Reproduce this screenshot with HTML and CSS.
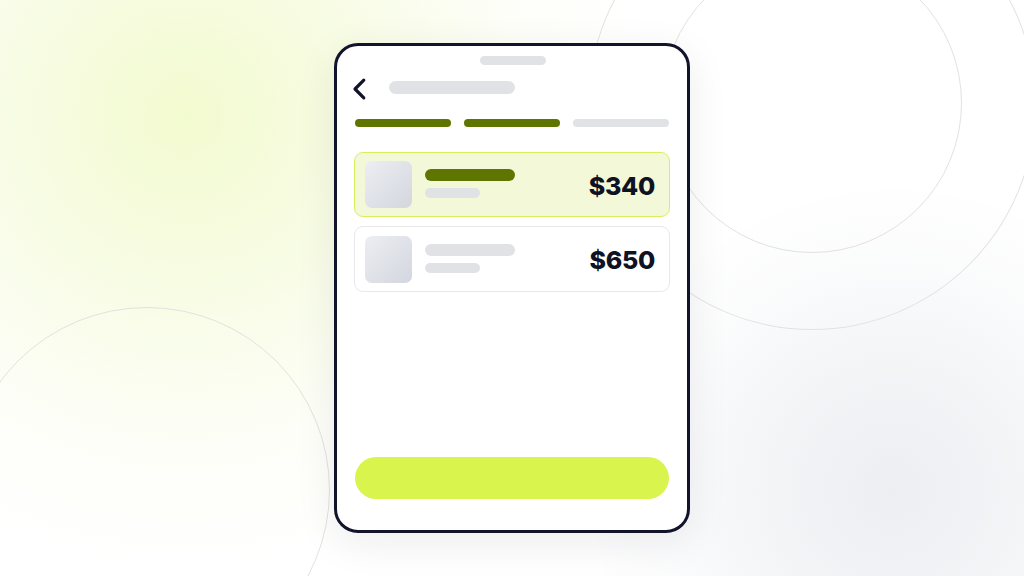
FILE: index.html
```html
<!DOCTYPE html>
<html lang="en">
<head>
<meta charset="utf-8">
<title>Checkout</title>
<link rel="stylesheet" href="styles.css">
</head>
<body>
<div class="stage">
  <div class="glow glow-lime"></div>
  <div class="glow glow-gray"></div>
  <div class="ring ring-big"></div>
  <div class="ring ring-small"></div>
  <div class="ring ring-left"></div>

  <div class="phone">
    <div class="handle"></div>
    <div class="header">
      <svg class="back" width="16" height="24" viewBox="0 0 16 24" aria-hidden="true">
        <path d="M12.8 3.2 L4 12 L12.8 20.8" fill="none" stroke="#12142b" stroke-width="3.2" stroke-linecap="round" stroke-linejoin="round"/>
      </svg>
      <div class="title-bar"></div>
    </div>
    <div class="progress">
      <div class="step done"></div>
      <div class="step done"></div>
      <div class="step"></div>
    </div>
    <div class="list">
      <div class="card selected">
        <div class="thumb"></div>
        <div class="lines">
          <div class="line line-main"></div>
          <div class="line line-sub"></div>
        </div>
        <div class="price">$340</div>
      </div>
      <div class="card">
        <div class="thumb"></div>
        <div class="lines">
          <div class="line line-main"></div>
          <div class="line line-sub"></div>
        </div>
        <div class="price">$650</div>
      </div>
    </div>
    <div class="cta"></div>
  </div>
</div>
</body>
</html>
```

FILE: styles.css
```css
* { box-sizing: border-box; }

html, body {
  margin: 0;
  padding: 0;
  width: 1024px;
  height: 576px;
  overflow: hidden;
  font-family: Inter, "Noto Sans", sans-serif;
  background: #ffffff;
}

.stage {
  position: relative;
  width: 1024px;
  height: 576px;
  overflow: hidden;
  display: flex;
  align-items: center;
  justify-content: center;
  background: #ffffff;
}

.glow {
  position: absolute;
  border-radius: 50%;
  pointer-events: none;
}

.glow-lime {
  left: -265px;
  top: -335px;
  width: 900px;
  height: 900px;
  background: radial-gradient(circle at center, rgba(242, 250, 205, 0.95) 0%, rgba(245, 251, 218, 0.7) 28%, rgba(250, 253, 236, 0.4) 52%, rgba(255, 255, 255, 0) 72%);
}

.glow-gray {
  left: 593px;
  top: 190px;
  width: 600px;
  height: 600px;
  background: radial-gradient(circle at center, rgba(236, 238, 242, 1) 0%, rgba(240, 241, 244, 0.75) 30%, rgba(246, 247, 249, 0.4) 55%, rgba(255, 255, 255, 0) 75%);
}

.ring {
  position: absolute;
  border-radius: 50%;
  border: 1.5px solid #e2e2e0;
}

.ring-big {
  left: 588px;
  top: -120px;
  width: 448px;
  height: 450px;
}

.ring-small {
  left: 662px;
  top: -47px;
  width: 300px;
  height: 300px;
}

.ring-left {
  left: -36px;
  top: 307px;
  width: 366px;
  height: 366px;
}

.phone {
  position: relative;
  width: 356px;
  height: 490px;
  background: #ffffff;
  border: 3px solid #12142b;
  border-radius: 24px;
  box-shadow: 0 10px 40px rgba(20, 22, 40, 0.08);
  display: flex;
  flex-direction: column;
  padding: 10px 18px 31px;
}

.handle {
  align-self: center;
  width: 66px;
  height: 9px;
  border-radius: 5px;
  background: #e1e2e5;
  margin-left: 2px;
}

.header {
  display: flex;
  align-items: center;
  height: 24px;
  margin-top: 12px;
  margin-left: -4px;
}

.back {
  display: block;
  flex: none;
}

.title-bar {
  width: 126px;
  height: 13px;
  border-radius: 7px;
  background: #e1e2e5;
  margin-left: 22px;
  margin-top: -3px;
}

.progress {
  display: flex;
  gap: 13px;
  margin-top: 18px;
}

.step {
  flex: 1;
  height: 8px;
  border-radius: 4px;
  background: #e1e2e5;
}

.step.done {
  background: #5e7600;
}

.list {
  display: flex;
  flex-direction: column;
  gap: 9px;
  margin-top: 25px;
  margin-left: -1px;
  margin-right: -1px;
}

.card {
  display: flex;
  align-items: center;
  height: 66px;
  padding: 0 14px 0 10px;
  border: 1.5px solid #e8e8eb;
  border-radius: 9px;
  background: #ffffff;
}

.card.selected {
  height: 65px;
  background: #f3f9d8;
  border-color: #d6ef5e;
}

.thumb {
  width: 47px;
  height: 47px;
  border-radius: 7px;
  background: linear-gradient(135deg, #eceef2 0%, #d3d6de 100%);
  flex: none;
}

.lines {
  display: flex;
  flex-direction: column;
  gap: 7px;
  margin-left: 13px;
  margin-top: -2px;
}

.line {
  border-radius: 6px;
  background: #e1e2e5;
}

.line-main {
  width: 90px;
  height: 12px;
}

.line-sub {
  width: 55px;
  height: 10px;
  border-radius: 5px;
}

.card.selected .line-main {
  background: #5e7600;
}

.price {
  margin-left: auto;
  margin-top: 3px;
  font-size: 25px;
  font-weight: 800;
  color: #0f1222;
  letter-spacing: -0.3px;
  line-height: 1;
}

.cta {
  margin-top: auto;
  height: 42px;
  border-radius: 21px;
  background: #d9f44c;
}
```
